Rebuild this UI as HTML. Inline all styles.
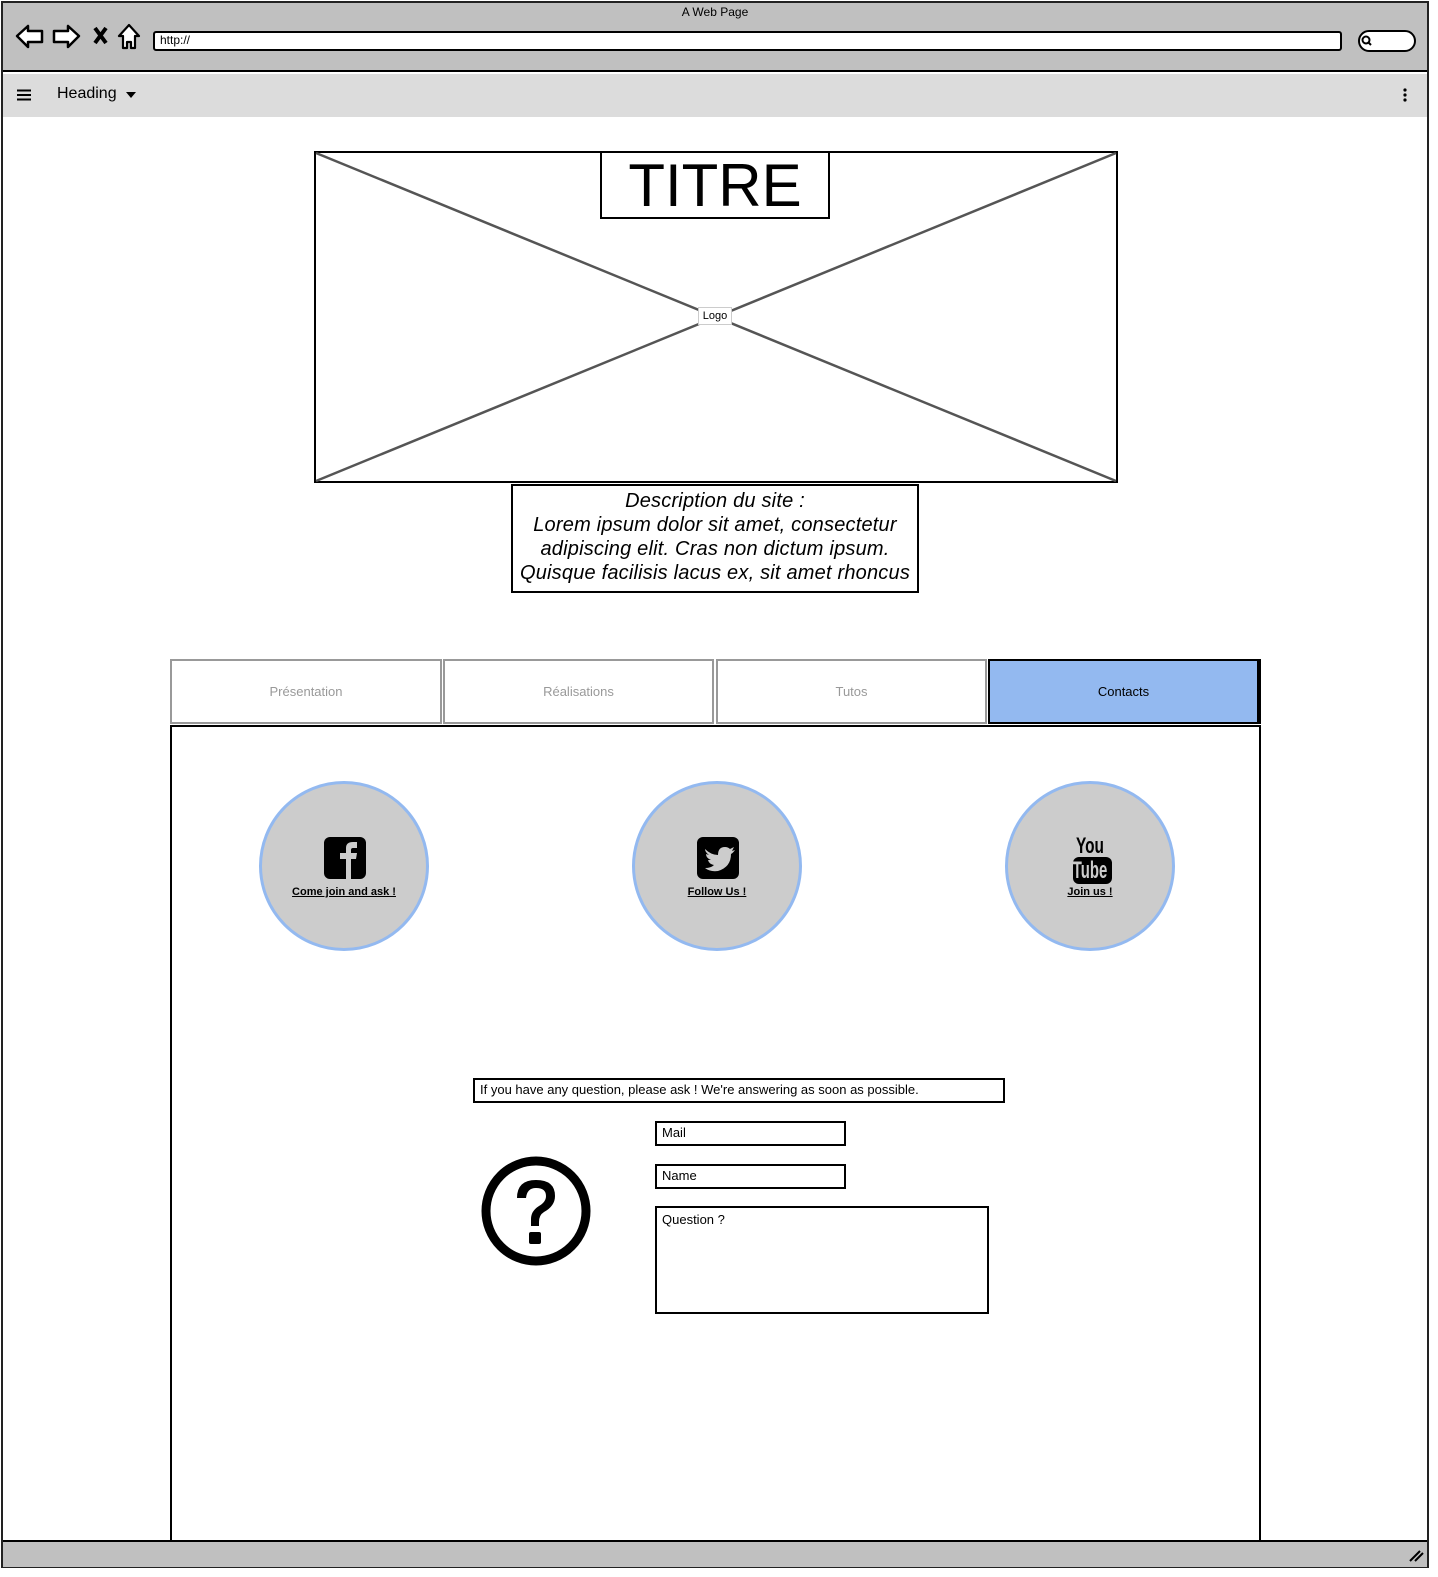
<!DOCTYPE html>
<html><head><meta charset="utf-8"><style>
*{box-sizing:border-box;margin:0;padding:0}
body{width:1438px;height:1577px;background:#fff;position:relative;font-family:"Liberation Sans",sans-serif;overflow:hidden}
.a{position:absolute}
.box{position:absolute;border:2px solid #000;background:#fff}
.tab{position:absolute;top:659px;height:65px;border:2px solid #999;background:#fff;color:#999;font-size:13px;display:flex;align-items:center;justify-content:center}
.circ{position:absolute;width:170px;height:170px;border-radius:50%;background:#ccc;border:3px solid #93b9f0}
.lbl{position:absolute;left:0;right:0;text-align:center;font-size:11px;font-weight:bold;text-decoration:underline;top:102px}
.inp{position:absolute;border:2px solid #000;background:#fff;font-size:13px;padding:2px 5px}
</style></head><body>
<div class="a" style="left:1px;top:1px;width:1428px;height:1567px;border:2px solid #222"></div>
<div class="a" style="left:3px;top:3px;width:1424px;height:69px;background:#c0c0c0;border-bottom:2px solid #000"></div>
<div class="a" style="left:0;top:5px;width:1430px;text-align:center;font-size:12px">A Web Page</div>
<svg class="a" style="left:14px;top:22px" width="130" height="30" viewBox="0 0 130 30">
<path d="M3 14 L14 4 L14 9 L28 9 L28 20 L14 20 L14 25 Z" fill="#fff" stroke="#000" stroke-width="2.5" stroke-linejoin="round"/>
<path d="M65 14 L54 4 L54 9 L40 9 L40 20 L54 20 L54 25 Z" fill="#fff" stroke="#000" stroke-width="2.5" stroke-linejoin="round"/>
<path d="M81 6 L92 21 M92 6 L81 21" stroke="#000" stroke-width="4"/>
<path d="M115 3 L105 14 L109 14 L109 26 L113 26 L113 20 L117 20 L117 26 L121 26 L121 14 L125 14 Z" fill="#fff" stroke="#000" stroke-width="2.2" stroke-linejoin="round"/>
</svg>
<div class="a" style="left:153px;top:31px;width:1189px;height:20px;background:#fff;border:2.5px solid #000;border-radius:3px;font-size:12px;padding-left:5px;line-height:15px">http://</div>
<div class="a" style="left:1358px;top:30px;width:58px;height:22px;background:#fff;border:2.5px solid #000;border-radius:11px"></div>
<svg class="a" style="left:1360px;top:34px" width="14" height="14"><circle cx="6" cy="6" r="3.5" fill="none" stroke="#000" stroke-width="2"/><path d="M8 8 L11 11" stroke="#000" stroke-width="2"/></svg>
<div class="a" style="left:3px;top:74px;width:1424px;height:43px;background:#dcdcdc"></div>
<svg class="a" style="left:17px;top:89px" width="14" height="12"><path d="M0 1.5H14M0 6H14M0 10.5H14" stroke="#000" stroke-width="2"/></svg>
<div class="a" style="left:57px;top:85px;font-size:16px">Heading</div>
<svg class="a" style="left:126px;top:92px" width="10" height="6"><path d="M0 0H10L5 6Z"/></svg>
<svg class="a" style="left:1402px;top:88px" width="6" height="14"><circle cx="3" cy="2" r="1.6"/><circle cx="3" cy="7" r="1.6"/><circle cx="3" cy="12" r="1.6"/></svg>

<svg class="a" style="left:314px;top:151px" width="804" height="332"><rect x="1" y="1" width="802" height="330" fill="#fff" stroke="#000" stroke-width="2"/><path d="M2 2 L802 330 M802 2 L2 330" stroke="#555" stroke-width="2.5"/></svg>
<div class="a" style="left:698px;top:307px;width:34px;height:18px;background:#fff;border:1px solid #ccc;font-size:11px;text-align:center;line-height:16px">Logo</div>
<div class="box" style="left:600px;top:151px;width:230px;height:68px;font-size:60px;text-align:center;line-height:66px">TITRE</div>
<div class="box" style="left:511px;top:484px;width:408px;height:109px;font-size:20px;letter-spacing:0.2px;font-style:italic;text-align:center;line-height:24px;padding-top:3px;overflow:hidden;white-space:nowrap">Description du site :<br>Lorem ipsum dolor sit amet, consectetur<br>adipiscing elit. Cras non dictum ipsum.<br>Quisque facilisis lacus ex, sit amet rhoncus<br>...</div>

<div class="tab" style="left:170px;width:272px">Présentation</div>
<div class="tab" style="left:443px;width:271px">Réalisations</div>
<div class="tab" style="left:716px;width:271px">Tutos</div>
<div class="tab" style="left:988px;width:273px;background:#93b9f0;color:#000;border:2px solid #000;border-right-width:4px">Contacts</div>
<div class="a" style="left:170px;top:725px;width:1091px;height:818px;border:2px solid #000"></div>

<div class="circ" style="left:259px;top:781px"><svg class="a" style="left:62px;top:53px" width="42" height="42" viewBox="0 0 42 42"><rect width="42" height="42" rx="6"/><path d="M22 42V22H16V16H22V11Q22 5 29 5H33V11H29Q27 11 27 13V16H33L32 22H27V42Z" fill="#ccc"/></svg><div class="lbl">Come join and ask !</div></div>
<div class="circ" style="left:632px;top:781px"><svg class="a" style="left:62px;top:53px" width="42" height="42" viewBox="0 0 42 42"><rect width="42" height="42" rx="6"/><path d="M8 12Q14 18 21 18Q21 10 28 10Q31 10 33 12L37 10L35 14L38 13Q36 16 34 17Q34 30 21 34Q13 35 8 31Q14 31 17 28Q12 27 11 23H14Q9 21 9 17L12 18Q8 15 8 12Z" fill="#ccc"/></svg><div class="lbl">Follow Us !</div></div>
<div class="circ" style="left:1005px;top:781px"><div class="a" style="left:0;right:0;top:51px;text-align:center;font-size:22px;font-weight:bold;transform:scaleX(.7);line-height:22px">You</div><div class="a" style="left:65px;top:73px;width:39px;height:27px;background:#000;border-radius:6px"></div><div class="a" style="left:0;right:0;top:73px;text-align:center;color:#ccc;font-size:24px;font-weight:bold;line-height:27px;transform:scaleX(.62)">Tube</div><div class="lbl">Join us !</div></div>

<div class="inp" style="left:473px;top:1078px;width:532px;height:25px">If you have any question, please ask ! We're answering as soon as possible.</div>
<div class="inp" style="left:655px;top:1121px;width:191px;height:25px">Mail</div>
<div class="inp" style="left:655px;top:1164px;width:191px;height:25px">Name</div>
<div class="inp" style="left:655px;top:1206px;width:334px;height:108px;padding-top:4px">Question ?</div>
<svg class="a" style="left:481px;top:1156px" width="110" height="110" viewBox="0 0 110 110"><circle cx="55" cy="55" r="50" fill="none" stroke="#000" stroke-width="9"/><path d="M36 42Q36 24 55 24Q74 24 74 40Q74 50 63 56Q58 59 58 66V70H50V63Q50 55 58 50Q65 46 65 40Q65 32 55 32Q46 32 45 42Z"/><rect x="48" y="76" width="12" height="12" rx="2"/></svg>

<div class="a" style="left:3px;top:1540px;width:1424px;height:27px;background:#c0c0c0;border-top:2px solid #000"></div>
<svg class="a" style="left:1408px;top:1548px" width="16" height="14"><path d="M2 13L12 3M7 13L15 5" stroke="#000" stroke-width="2"/></svg>
</body></html>
